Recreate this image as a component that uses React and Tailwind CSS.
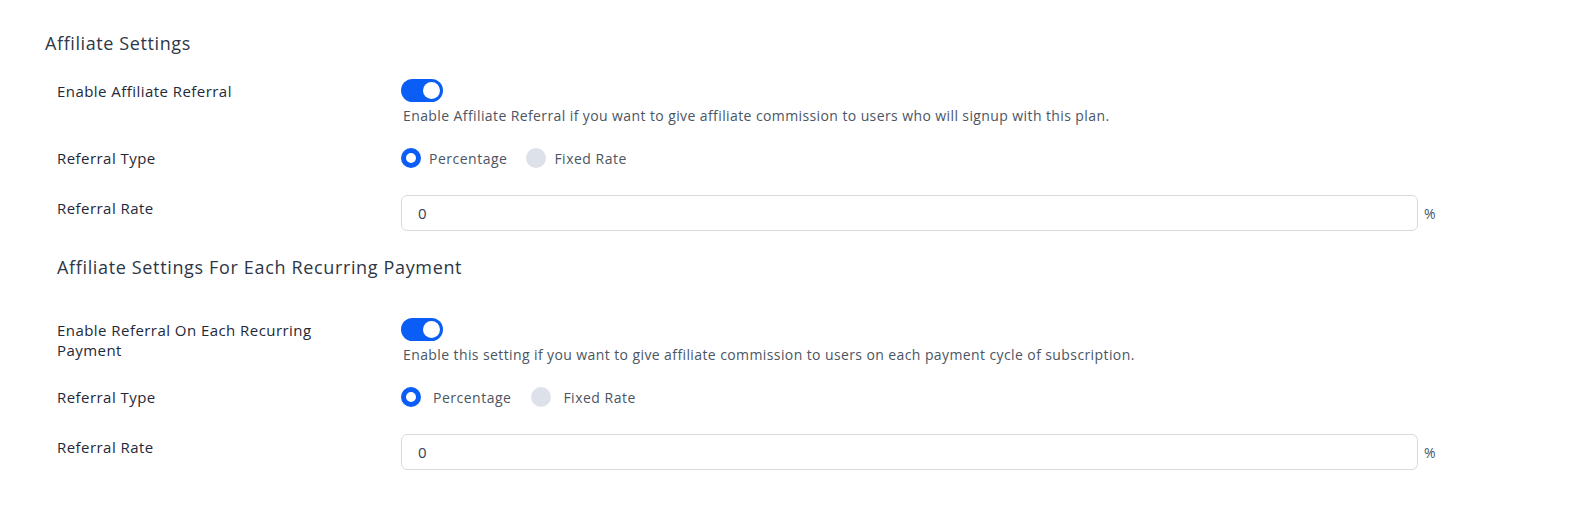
import { useState } from 'react';

function Toggle({ on, onChange }) {
  return (
    <button
      onClick={() => onChange(!on)}
      className={`relative w-[42px] h-[23px] shrink-0 rounded-full transition-colors ${on ? 'bg-[#0b5ef5]' : 'bg-gray-300'}`}
    >
      <span
        className={`absolute top-[3px] w-[17px] h-[17px] rounded-full bg-white transition-all ${on ? 'left-[22px]' : 'left-[3px]'}`}
      />
    </button>
  );
}

function Radio({ checked, label, onClick, gap }) {
  return (
    <label onClick={onClick} className={`flex items-center cursor-pointer ${gap}`}>
      <span
        className={`w-[20px] h-[20px] rounded-full ${checked ? 'border-[5px] border-[#0b5ef5] bg-white' : 'bg-[#dde1e9]'}`}
      />
      <span className="text-[14px] tracking-[0.5px] text-[#4b5563]">{label}</span>
    </label>
  );
}

function Section({ title, titleClass, toggleLabel, description, wide }) {
  const [enabled, setEnabled] = useState(true);
  const [type, setType] = useState('percentage');
  const [rate, setRate] = useState('0');

  const labelCls = 'w-[344px] shrink-0 text-[15px] tracking-[0.45px] font-medium text-[#1f2937]';

  return (
    <div>
      <h2 className={titleClass}>{title}</h2>

      <div className="flex pl-[57px]">
        <div className={`${labelCls} pr-[40px] pt-[2px] leading-[20px]`}>{toggleLabel}</div>
        <div className="flex flex-col">
          <Toggle on={enabled} onChange={setEnabled} />
          <p className="mt-[4px] pl-[2px] text-[14px] tracking-[0.4px] leading-[20px] text-[#4b5563]">{description}</p>
        </div>
      </div>

      <div className="flex items-center pl-[57px] mt-[22px] h-[20px]">
        <div className={labelCls}>Referral Type</div>
        <div className={`flex items-center ${wide ? 'gap-[20px]' : 'gap-[19px]'}`}>
          <Radio checked={type === 'percentage'} label="Percentage" onClick={() => setType('percentage')} gap={wide ? 'gap-[12px]' : 'gap-[8px]'} />
          <Radio checked={type === 'fixed'} label="Fixed Rate" onClick={() => setType('fixed')} gap={wide ? 'gap-[12px]' : 'gap-[8px]'} />
        </div>
      </div>

      <div className="flex items-start pl-[57px] mt-[27px]">
        <div className={`${labelCls} pt-[3px] leading-[20px]`}>Referral Rate</div>
        <input
          value={rate}
          onChange={(e) => setRate(e.target.value)}
          className="w-[1017px] shrink-0 h-[36px] px-[16px] rounded-[6px] border border-[#d7dbe0] text-[15px] text-[#374151] outline-none"
        />
        <span className="ml-[6px] self-center text-[14px] text-[#4b5563]">%</span>
      </div>
    </div>
  );
}

export default function App() {
  return (
    <div className="min-h-[531px] bg-white pt-[31px]" style={{ fontFamily: '"Open Sans", "Liberation Sans", sans-serif' }}>
      <Section
        title="Affiliate Settings"
        titleClass="pl-[45px] text-[18px] tracking-[0.6px] leading-[24px] text-[#2d3748] mb-[24px]"
        toggleLabel="Enable Affiliate Referral"
        description="Enable Affiliate Referral if you want to give affiliate commission to users who will signup with this plan."
      />
      <div className="mt-[24px]">
        <Section
          title="Affiliate Settings For Each Recurring Payment"
          titleClass="pl-[57px] text-[18px] tracking-[0.65px] leading-[24px] text-[#2d3748] mb-[39px]"
          toggleLabel="Enable Referral On Each Recurring Payment"
          description="Enable this setting if you want to give affiliate commission to users on each payment cycle of subscription."
          wide
        />
      </div>
    </div>
  );
}
